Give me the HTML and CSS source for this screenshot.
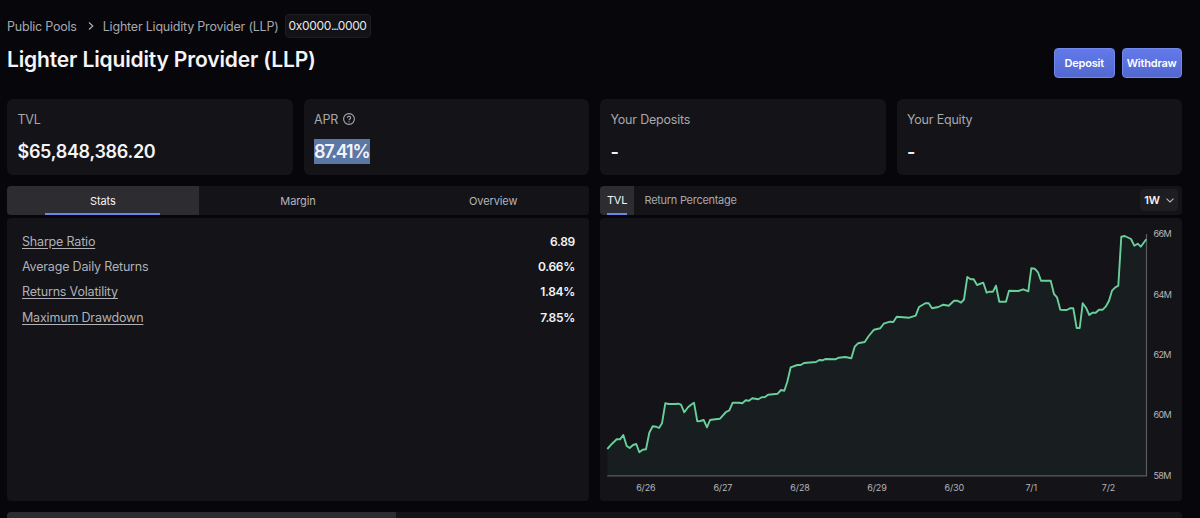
FILE: index.html
```html
<!DOCTYPE html>
<html lang="en">
<head>
    <meta charset="UTF-8">
    <meta name="viewport" content="width=device-width, initial-scale=1.0">
    <title>Lighter Liquidity Provider (LLP)</title>
    <link rel="stylesheet" href="styles.css">
</head>
<body>
    <nav class="breadcrumb">
        <a class="crumb-root">Public Pools</a>
        <svg class="crumb-arrow" width="6" height="8" viewBox="0 0 6 8"><path d="M1 0.5 L4.8 4 L1 7.5"/></svg>
        <span class="crumb-page">Lighter Liquidity Provider (LLP)</span>
        <span class="address">0x0000<span class="dots">...</span>0000</span>
    </nav>

    <header>
        <h1>Lighter Liquidity Provider (LLP)</h1>
        <div class="actions">
            <button class="deposit">Deposit</button>
            <button class="withdraw">Withdraw</button>
        </div>
    </header>

    <section class="cards">
        <div class="card">
            <div class="label">TVL</div>
            <div class="value">$65,848,386.20</div>
        </div>
        <div class="card">
            <div class="label">APR
                <svg width="12" height="12" viewBox="0 0 12 12"><circle cx="6" cy="6" r="5.4"/><path d="M4.4 4.9 a1.6 1.5 0 1 1 2.4 1.2 q-0.8 0.4 -0.8 1.1 M6 8.3 v1"/></svg>
            </div>
            <div class="value"><span class="selected">87.41%</span></div>
        </div>
        <div class="card">
            <div class="label">Your Deposits</div>
            <div class="value">-</div>
        </div>
        <div class="card">
            <div class="label">Your Equity</div>
            <div class="value">-</div>
        </div>
    </section>

    <main>
        <section class="column">
            <div class="tabs">
                <div class="tab active">Stats</div>
                <div class="tab">Margin</div>
                <div class="tab">Overview</div>
            </div>
            <div class="panel stats">
                <div class="row"><span class="name hint">Sharpe Ratio</span><span class="number">6.89</span></div>
                <div class="row"><span class="name">Average Daily Returns</span><span class="number">0.66%</span></div>
                <div class="row"><span class="name hint">Returns Volatility</span><span class="number">1.84%</span></div>
                <div class="row"><span class="name hint">Maximum Drawdown</span><span class="number">7.85%</span></div>
            </div>
        </section>

        <section class="column">
            <div class="tabs chart-tabs">
                <div class="chart-tab active">TVL</div>
                <div class="chart-tab">Return Percentage</div>
                <div class="range">1W
                    <svg width="8" height="5" viewBox="0 0 8 5"><path d="M0.5 0.6 L4 4 L7.5 0.6"/></svg>
                </div>
            </div>
            <div class="panel">
                <svg class="chart" width="582" height="283" viewBox="600 218 582 283">
                    <path class="area" d="M607.3 449 L612 443.7 616.7 439.3 620 439.3 623.3 435 626.7 446 629.7 448 633 445 636.3 444 639.3 452.3 642.7 449.7 646 449.3 649.3 432.7 652.7 426.3 656 426.7 659 428 662 423.3 665.3 403.3 668.7 404 675 404 678.3 403.7 681 404.7 684.3 412.3 688 407.3 691 404.7 694 402.7 697.3 421.3 700.3 421 703.7 420 707 427.3 710 420 713.3 419.5 720 418.7 726 412 729.3 410.3 732.7 402.7 739 402.7 742.3 403.3 745.7 400.3 749 400.7 752.3 398.3 758.3 399.3 761.7 397.3 765 397 768 394.7 777.7 393.7 781 390 784.3 390.7 787.3 381.7 790.7 367.3 797.3 365 800.7 365 804 363 816 362 819.3 360 822.7 360.3 825.3 359 835.3 359.3 838.7 357.7 845.3 357 851.3 358.3 854.7 346.7 858 343.3 864.7 342 868.7 336 874 329.7 880.3 328.3 883.7 323.7 890 321.7 893.3 322 896.7 316.7 909.3 317.7 915.7 315.7 919 307 925.3 303.3 928.7 303.3 932 308.3 938.3 307 943.3 304.7 948.7 305.7 954 300.7 957.3 300.7 961 302.7 964 299.5 967.3 277 970.7 279.3 973.7 279.3 977 285 983.3 282.7 986.7 292.7 989.3 291.7 993 291.7 996 285.7 999.3 301.7 1006 301.7 1009 290.7 1018.3 291 1023.3 289.3 1028.3 291.3 1031.3 268.3 1034.7 268.7 1038 272.3 1041 280.7 1050.7 280.7 1054 294 1057 297.3 1060.3 309.7 1066.7 310 1070 308.3 1073.3 308.3 1076.7 328 1079.7 328 1082.7 303.3 1086 307.7 1089.3 315 1092.3 312.7 1095.7 312.7 1099 309.7 1102.7 309.7 1105.7 306.7 1109 300.7 1112 290.7 1115.3 287.3 1118.3 285.7 1121.3 236.7 1124.7 236 1131 239 1134.3 245.7 1137.7 243.7 1140.7 246.7 1146.3 239.3 V475.5 H607.3 Z"/>
                    <path class="axis" d="M607.3 475.8 H1146.5 V234"/>
                    <path class="line" d="M607.3 449 L612 443.7 616.7 439.3 620 439.3 623.3 435 626.7 446 629.7 448 633 445 636.3 444 639.3 452.3 642.7 449.7 646 449.3 649.3 432.7 652.7 426.3 656 426.7 659 428 662 423.3 665.3 403.3 668.7 404 675 404 678.3 403.7 681 404.7 684.3 412.3 688 407.3 691 404.7 694 402.7 697.3 421.3 700.3 421 703.7 420 707 427.3 710 420 713.3 419.5 720 418.7 726 412 729.3 410.3 732.7 402.7 739 402.7 742.3 403.3 745.7 400.3 749 400.7 752.3 398.3 758.3 399.3 761.7 397.3 765 397 768 394.7 777.7 393.7 781 390 784.3 390.7 787.3 381.7 790.7 367.3 797.3 365 800.7 365 804 363 816 362 819.3 360 822.7 360.3 825.3 359 835.3 359.3 838.7 357.7 845.3 357 851.3 358.3 854.7 346.7 858 343.3 864.7 342 868.7 336 874 329.7 880.3 328.3 883.7 323.7 890 321.7 893.3 322 896.7 316.7 909.3 317.7 915.7 315.7 919 307 925.3 303.3 928.7 303.3 932 308.3 938.3 307 943.3 304.7 948.7 305.7 954 300.7 957.3 300.7 961 302.7 964 299.5 967.3 277 970.7 279.3 973.7 279.3 977 285 983.3 282.7 986.7 292.7 989.3 291.7 993 291.7 996 285.7 999.3 301.7 1006 301.7 1009 290.7 1018.3 291 1023.3 289.3 1028.3 291.3 1031.3 268.3 1034.7 268.7 1038 272.3 1041 280.7 1050.7 280.7 1054 294 1057 297.3 1060.3 309.7 1066.7 310 1070 308.3 1073.3 308.3 1076.7 328 1079.7 328 1082.7 303.3 1086 307.7 1089.3 315 1092.3 312.7 1095.7 312.7 1099 309.7 1102.7 309.7 1105.7 306.7 1109 300.7 1112 290.7 1115.3 287.3 1118.3 285.7 1121.3 236.7 1124.7 236 1131 239 1134.3 245.7 1137.7 243.7 1140.7 246.7 1146.3 239.3"/>
                    <g class="y-labels">
                        <text x="1153.5" y="237">66M</text>
                        <text x="1153.5" y="297.5">64M</text>
                        <text x="1153.5" y="358">62M</text>
                        <text x="1153.5" y="418">60M</text>
                        <text x="1153.5" y="478.5">58M</text>
                    </g>
                    <g class="x-labels">
                        <text x="645.8" y="491">6/26</text>
                        <text x="722.8" y="491">6/27</text>
                        <text x="800" y="491">6/28</text>
                        <text x="877" y="491">6/29</text>
                        <text x="954.2" y="491">6/30</text>
                        <text x="1031.2" y="491">7/1</text>
                        <text x="1108.5" y="491">7/2</text>
                    </g>
                </svg>
            </div>
        </section>
    </main>

    <div class="tabs bottom-tabs">
        <div class="tab active"></div>
        <div class="tab"></div>
        <div class="tab"></div>
    </div>
</body>
</html>
```
FILE: styles.css
```css
* {
    box-sizing: border-box;
}
body {
    font-family: Inter, "Liberation Sans", sans-serif;
    margin: 0;
    padding: 14px 18px 0 7px;
    height: 518px;
    overflow: hidden;
    background-color: #06060b;
    color: #f4f4f6;
    font-size: 13px;
}
.breadcrumb {
    display: flex;
    align-items: center;
    height: 24px;
    color: #a8a8ad;
    font-size: 12.5px;
    letter-spacing: -0.21px;
}
.crumb-arrow {
    margin: 0 9px 0 11px;
}
.crumb-arrow path,
.range path {
    fill: none;
    stroke: #b5b5ba;
    stroke-width: 1.1;
}
.address {
    margin-left: 6px;
    height: 24px;
    width: 86px;
    line-height: 22px;
    text-align: center;
    border: 1px solid #1d1d22;
    border-radius: 4px;
    background-color: #121217;
    color: #e8e8ea;
    font-size: 12px;
    letter-spacing: -0.35px;
}
.dots {
    letter-spacing: -1.2px;
}
header {
    display: flex;
    justify-content: space-between;
    height: 61px;
}
h1 {
    margin: 7px 0 0;
    font-size: 21px;
    line-height: 30px;
    font-weight: 600;
    letter-spacing: -0.15px;
}
.actions {
    display: flex;
    gap: 7px;
    padding-top: 10px;
}
button {
    width: 60.5px;
    height: 30px;
    padding: 0;
    border: 1px solid #7388ec;
    border-radius: 4px;
    background: linear-gradient(#627aea, #5268cf);
    color: white;
    font-family: inherit;
    font-size: 11px;
    font-weight: 600;
    letter-spacing: -0.2px;
}
.cards {
    display: grid;
    grid-template-columns: repeat(4, 1fr);
    gap: 11px;
}
.card {
    height: 76px;
    padding: 12px 10.5px;
    border-radius: 6px;
    background-color: #131318;
}
.label {
    display: flex;
    align-items: center;
    gap: 5px;
    height: 16px;
    color: #a8a8ad;
    font-size: 12.5px;
    letter-spacing: -0.2px;
}
.label svg {
    fill: none;
    stroke: #a8a8ad;
    stroke-width: 1.1;
}
.value {
    margin-top: 12px;
    font-size: 18px;
    line-height: 25px;
    font-weight: 600;
    letter-spacing: -0.3px;
}
.selected {
    display: inline-block;
    height: 25px;
    background-color: #5a77a6;
    letter-spacing: -1.2px;
    padding-right: 1px;
}
main {
    display: grid;
    grid-template-columns: 1fr 1fr;
    gap: 11px;
    margin-top: 11px;
}
.tabs {
    display: flex;
    gap: 3.5px;
    height: 28.5px;
    border-radius: 4px;
    background-color: #131318;
    overflow: hidden;
    font-size: 11px;
}
.tab {
    position: relative;
    flex: 1;
    line-height: 30px;
    text-align: center;
    color: #b5b5ba;
    letter-spacing: -0.1px;
}
.active {
    background-color: #2c2c31;
    color: #f4f4f6;
}
.column .active::after {
    content: "";
    position: absolute;
    left: 20%;
    right: 20%;
    bottom: 0;
    height: 2px;
    background-color: #6f86e8;
}
.chart-tab {
    position: relative;
    padding: 0 7px;
    line-height: 28px;
    color: #a8a8ad;
    letter-spacing: -0.28px;
}
.chart-tabs .active {
    color: #f4f4f6;
    width: 34px;
}
.range {
    display: flex;
    align-items: center;
    justify-content: center;
    gap: 6px;
    width: 38px;
    height: 22px;
    margin: 3px 4px 0 auto;
    border-radius: 4px;
    background-color: #1d1d22;
    font-weight: 600;
    letter-spacing: -0.3px;
}
.panel {
    height: 283px;
    margin-top: 3.5px;
    border-radius: 4px;
    background-color: #131318;
}
.stats {
    padding: 11px 14px 0 15px;
}
.row {
    display: flex;
    justify-content: space-between;
    height: 25.2px;
    line-height: 26.6px;
    font-size: 12.5px;
}
.name {
    color: #b1b1b6;
    letter-spacing: -0.18px;
}
.hint {
    text-decoration: underline;
    text-underline-offset: 2px;
}
.number {
    font-size: 12px;
    font-weight: 600;
    letter-spacing: -0.3px;
}
.chart {
    display: block;
}
.area {
    fill: #181d1f;
}
.line {
    fill: none;
    stroke: #69cf9c;
    stroke-width: 1.9;
    stroke-linejoin: round;
}
.axis {
    fill: none;
    stroke: #5c5c60;
    stroke-width: 1.2;
}
.chart text {
    fill: #b5b5ba;
    font-size: 9px;
    letter-spacing: -0.15px;
}
.chart .y-labels text {
    letter-spacing: -0.6px;
}
.x-labels {
    text-anchor: middle;
}
.bottom-tabs {
    margin-top: 11px;
}
```
